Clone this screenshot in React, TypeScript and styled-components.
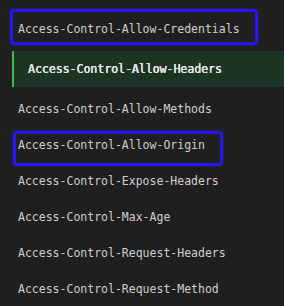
import styled, { createGlobalStyle } from 'styled-components'

const GlobalStyle = createGlobalStyle`
    html, body {
        margin: 0;
        padding: 0;
        background: #1f1f1f;
    }
`

const Panel = styled.div`
    width: 284px;
    height: 306px;
    overflow: hidden;
    background: #1f1f1f;
    display: flex;
    flex-direction: column;
    padding-top: 11px;
    box-sizing: border-box;
    font-family: "DejaVu Sans Mono", "Liberation Mono", monospace;
    font-size: 11.5px;
    color: #cfcfcf;
`

type Mark = { top: number; bottom: number; left: number; right: number }

const Row = styled.div<{ $gap?: number; $mark?: Mark }>`
    position: relative;
    height: 36px;
    flex: none;
    display: flex;
    align-items: center;
    padding-left: 18px;
    margin-bottom: ${(p) => p.$gap ?? 0}px;
    white-space: nowrap;

    ${(p) => p.$mark && `
        &::before {
            content: '';
            position: absolute;
            top: ${p.$mark.top}px;
            bottom: ${p.$mark.bottom}px;
            left: ${p.$mark.left}px;
            right: ${p.$mark.right}px;
            border: 3px solid #2b14f2;
            border-radius: 4px;
            box-shadow: 0 0 2px rgba(60, 40, 255, 0.6);
            pointer-events: none;
        }
    `}
`

const ActiveRow = styled.div`
    height: 36px;
    flex: none;
    margin-left: 12px;
    margin-bottom: 4px;
    display: flex;
    align-items: center;
    padding-left: 14px;
    background: #1b3424;
    border-left: 2.5px solid #3fb950;
    color: #e4e4e4;
    text-shadow: 0 0 0.4px #e4e4e4, 0.3px 0 0 #e4e4e4;
    white-space: nowrap;
`

function App() {
    return (
        <>
            <GlobalStyle />
            <Panel>
                <Row $gap={4} $mark={{ top: -2, bottom: 2, left: 10, right: 26 }}>
                    Access-Control-Allow-Credentials
                </Row>
                <ActiveRow>Access-Control-Allow-Headers</ActiveRow>
                <Row>Access-Control-Allow-Methods</Row>
                <Row $mark={{ top: 4, bottom: -3, left: 13, right: 61 }}>
                    Access-Control-Allow-Origin
                </Row>
                <Row>Access-Control-Expose-Headers</Row>
                <Row>Access-Control-Max-Age</Row>
                <Row>Access-Control-Request-Headers</Row>
                <Row>Access-Control-Request-Method</Row>
            </Panel>
        </>
    )
}

export default App
